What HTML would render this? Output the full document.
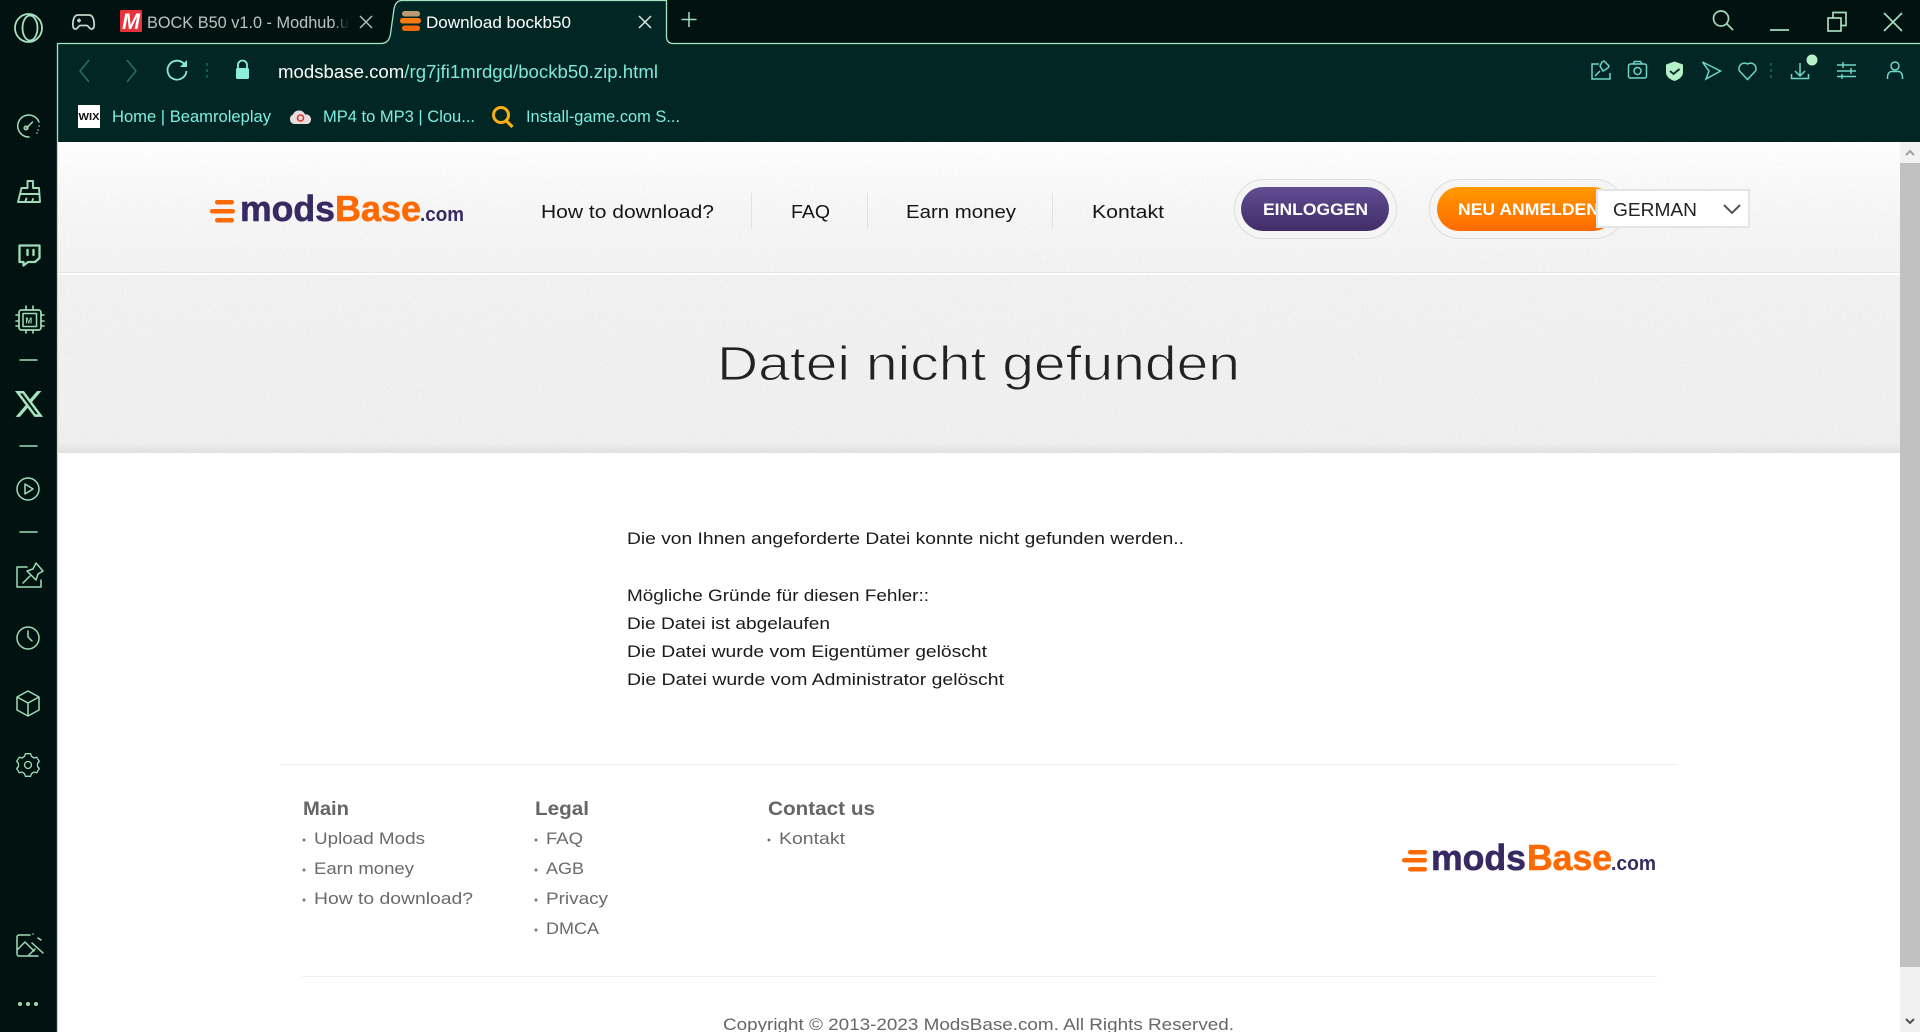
<!DOCTYPE html>
<html lang="de"><head><meta charset="utf-8"><title>Download bockb50</title>
<style>
html,body{margin:0;padding:0;width:1920px;height:1032px;overflow:hidden;background:#011210}
svg{display:block;position:absolute;left:0;top:0}
text{font-family:"Liberation Sans",sans-serif}
</style></head><body>
<svg xmlns="http://www.w3.org/2000/svg" width="1920" height="1032" viewBox="0 0 1920 1032">
<defs>
<linearGradient id="hdr" x1="0" y1="0" x2="0" y2="1"><stop offset="0" stop-color="#ffffff"/><stop offset=".5" stop-color="#f7f7f7"/><stop offset="1" stop-color="#f3f3f3"/></linearGradient>
<linearGradient id="band" x1="0" y1="0" x2="0" y2="1"><stop offset="0" stop-color="#f2f2f2"/><stop offset=".94" stop-color="#f0f0f0"/><stop offset="1" stop-color="#e2e2e2"/></linearGradient>
<linearGradient id="pur" x1="0" y1="0" x2="0" y2="1"><stop offset="0" stop-color="#614d92"/><stop offset="1" stop-color="#412e68"/></linearGradient>
<linearGradient id="org" x1="0" y1="0" x2="0" y2="1"><stop offset="0" stop-color="#ff9a00"/><stop offset="1" stop-color="#ff6a00"/></linearGradient>
<linearGradient id="fade" x1="0" y1="0" x2="1" y2="0"><stop offset="0" stop-color="#011210" stop-opacity="0"/><stop offset="1" stop-color="#011210"/></linearGradient>
<filter id="noise" x="0" y="0" width="100%" height="100%"><feTurbulence type="fractalNoise" baseFrequency=".55" numOctaves="2" seed="4"/><feColorMatrix values="0 0 0 0 0  0 0 0 0 0  0 0 0 0 0  0 0 0 .06 -.024"/></filter>
</defs>

<!-- browser frame -->
<rect width="1920" height="1032" fill="#011210"/>
<rect x="57" y="43" width="1863" height="100" fill="#022624"/>
<path d="M57.500 1032V43.500H381Q389 43.500 390.500 34L394 9Q395.500 .5 402 .5H666.500V36Q666.500 43.500 673 43.500H1920" fill="#022624" stroke="#a6e5c2" stroke-width="1.300"/>

<!-- opera logo -->
<g fill="none" stroke="#a6e3c0" stroke-width="1.800"><ellipse cx="28.500" cy="28" rx="13.500" ry="14"/><ellipse cx="30" cy="28" rx="7.500" ry="12.500"/></g>
<!-- gamepad -->
<g fill="none" stroke="#c3d6cb" stroke-width="1.800"><path d="M78 15H89C92 15 93.500 18 94 22C94.500 26 94 29 91.500 29C89.500 29 88 25.500 87 25.500H80C79 25.500 77.500 29 75.500 29C73 29 72.500 26 73 22C73.500 18 75 15 78 15Z"/><path d="M77 20.500h4M79 18.500v4M87 19.500h.1M89 22h.1"/></g>
<!-- tab 1 -->
<rect x="120" y="10" width="22" height="22" rx="1" fill="#e8333c"/>
<text x="122" y="29" font-size="22" font-weight="700" font-style="italic" fill="#fff" textLength="18" lengthAdjust="spacingAndGlyphs">M</text>
<text x="147" y="28" font-size="17" fill="#bcc5c1" textLength="202" lengthAdjust="spacingAndGlyphs">BOCK B50 v1.0 - Modhub.u</text>
<rect x="332" y="8" width="17" height="28" fill="url(#fade)"/>
<path d="M360 16l12 12M372 16l-12 12" stroke="#b3bdb8" stroke-width="1.500"/>
<!-- tab 2 -->
<rect x="402" y="11" width="18" height="5.500" rx="2.700" fill="#b99a72"/>
<rect x="400" y="18" width="21" height="5.500" rx="2.700" fill="#fb7a10"/>
<rect x="402" y="25.500" width="18" height="5.500" rx="2.700" fill="#f26a05"/>
<text x="426" y="28" font-size="17" fill="#fff" textLength="145" lengthAdjust="spacingAndGlyphs">Download bockb50</text>
<path d="M639 16l12 12M651 16l-12 12" stroke="#dfe8e4" stroke-width="1.500"/>
<path d="M689 12v15M681.500 19.500h15" stroke="#a6dcc0" stroke-width="1.500"/>

<!-- window controls -->
<g fill="none" stroke="#a6dcbc" stroke-width="1.700">
<circle cx="1721" cy="18.500" r="7.500"/><path d="M1727 24l6 6"/>
<path d="M1770 30h19"/>
<rect x="1828" y="18" width="13" height="13"/><path d="M1833 18v-5.500h13v13h-5"/>
<path d="M1884 13l18 18M1902 13l-18 18"/>
</g>

<!-- nav toolbar -->
<g fill="none" stroke="#2c6f68" stroke-width="1.400"><path d="M89 60L80 71l9 11"/><path d="M127 60l9 11-9 11"/></g>
<path d="M185 65a9.500 9.500 0 1 0 1.500 6" fill="none" stroke="#8ce8d8" stroke-width="1.800"/><path d="M187 60v7h-7z" fill="#8ce8d8"/>
<g fill="#0b5a50"><rect x="206" y="63" width="2" height="3"/><rect x="206" y="69" width="2" height="3"/><rect x="206" y="75" width="2" height="3"/></g>
<path d="M238 68v-3a4.500 4.500 0 0 1 9 0v3" fill="none" stroke="#8ef0dc" stroke-width="1.800"/><rect x="236" y="68" width="13" height="11" rx="1.500" fill="#8ef0dc"/>
<text x="278" y="78" font-size="18" fill="#fff" textLength="380" lengthAdjust="spacingAndGlyphs">modsbase.com<tspan fill="#7fe9d9">/rg7jfi1mrdgd/bockb50.zip.html</tspan></text>

<!-- toolbar right icons -->
<g fill="none" stroke="#6ed6c6" stroke-width="1.500">
<path d="M1599 64h-7v15h18v-6"/><path d="M1595 76l5-5M1600 66l3 5 5-3 1-2-5-5-2 1z"/>
<rect x="1628.500" y="64" width="18" height="14" rx="2"/><path d="M1633 64l1.500-2.500h6l1.500 2.500"/><circle cx="1637.500" cy="71" r="3.500"/>
<path d="M1702.500 62l18 9-14.500 8 3-8z"/><path d="M1747.500 79.500l-8-8.500a5.500 5.500 0 0 1 8-7 5.500 5.500 0 0 1 8 7z"/>
<path d="M1800 63v12M1795 71l5 5 5-5M1791.500 74v4.500h17V74"/>
<path d="M1837 65h19M1837 71h19M1837 76.500h19M1843 62v6M1851 68v6M1842 74v5"/>
<circle cx="1895" cy="66" r="4"/><path d="M1887.500 79v-2c0-4 3-5.500 3.500-5.500h8c.5 0 3.500 1.500 3.500 5.500v2"/>
</g>
<path d="M1674.500 61.500l8.500 3v8c0 4-4 7-8.500 8.500-4.500-1.500-8.500-4.500-8.500-8.500v-8z" fill="#b4f0c8"/>
<path d="M1670 71l3.500 3 6-5" fill="none" stroke="#022624" stroke-width="1.800"/>
<g fill="#0b5a50"><rect x="1770" y="63" width="2" height="3"/><rect x="1770" y="69" width="2" height="3"/><rect x="1770" y="75" width="2" height="3"/></g>
<circle cx="1812" cy="60" r="5.500" fill="#b4f0c8"/>

<!-- bookmarks -->
<rect x="78" y="105" width="22" height="23" fill="#fff"/>
<text x="78.500" y="120" font-size="10" font-weight="700" fill="#111" textLength="21" lengthAdjust="spacingAndGlyphs">WIX</text>
<text x="112" y="122" font-size="17" fill="#7eeee0" textLength="159" lengthAdjust="spacingAndGlyphs">Home | Beamroleplay</text>
<path d="M294 124a5 5 0 0 1-1-9.500 6 6 0 0 1 6-4c3 0 5 1.500 6 4a5 5 0 0 1 3 9.500z" fill="#e8dcdc"/><circle cx="300.500" cy="118" r="3" fill="none" stroke="#d83030" stroke-width="1.500"/>
<text x="323" y="122" font-size="17" fill="#7eeee0" textLength="152" lengthAdjust="spacingAndGlyphs">MP4 to MP3 | Clou...</text>
<circle cx="501" cy="115" r="7.500" fill="none" stroke="#f8b010" stroke-width="3"/><path d="M506.500 121l6 6" stroke="#f8b010" stroke-width="3.200"/>
<text x="526" y="122" font-size="17" fill="#7eeee0" textLength="154" lengthAdjust="spacingAndGlyphs">Install-game.com S...</text>

<!-- sidebar icons -->
<g fill="none" stroke="#9fdcb8" stroke-width="1.500" stroke-linecap="round" stroke-linejoin="round">
<path d="M39 122A11 11 0 1 0 29 137"/><path d="M26.500 128l6-6"/><circle cx="26" cy="128" r="1.800"/><path d="M38 130h.1M39 126h.1M37 133h.1"/>
<g stroke-width="1.900">
<path d="M27.500 188v-7h5.500v7h6L40 202H18L21.500 188ZM21 194h18M25 202l1.500-3.500M32 202l1-3"/>
<path d="M19.500 245.500H39.500V258L35 262H28L23.500 265.500V262H19.500Z" stroke-width="2.300"/>
<path d="M27.500 250v5M33.500 250v5" stroke-width="2.400"/>
<rect x="19" y="310" width="22" height="20" rx="2.500" stroke-width="1.700"/><rect x="23" y="313.500" width="13.500" height="13" stroke-width="1.500"/>
<path d="M26 310v-4M33 310v-4M26 330v3M33 330v3M19 315h-3M19 321h-3M19 326h-3M41 315h3M41 321h3M41 326h3" stroke-width="1.600"/>
</g>
<path d="M20 360h17M20 446h17M20 532h17"/>
<circle cx="28" cy="489" r="11"/><path d="M25 484l8 5-8 5z"/>
<path d="M27 567H17V587H41V580"/><path d="M36 563l7 8-5 3-2 6-9-9 6-2zM30 576l-7 7"/>
<circle cx="28" cy="638" r="11"/><path d="M28 631l0 6 4 4"/>
<path d="M28 691l11 6v13l-11 6-11-6v-13zM17 697l11 6 11-6M28 703v13"/>
<g transform="translate(28 765) scale(.87) translate(-28 -765)"><path d="M24 755l1-3h6l1 3 3 2 3-1 3 5-2 2v4l2 2-3 5-3-1-3 2-1 3h-6l-1-3-3-2-3 1-3-5 2-2v-4l-2-2 3-5 3 1z"/><circle cx="28" cy="765" r="4"/></g>
<path d="M30 935H19a2 2 0 0 0-2 2v17a2 2 0 0 0 2 2h19M17 950l8-8 9 9M28 956l7-7M43 953l-11-10M33 934h.1M38 938l3 2"/>
</g>
<path transform="translate(13.400 388) scale(1.300 1.330)" d="M18.244 2.250h3.308l-7.227 8.260 8.502 11.240H16.170l-5.214-6.817L4.990 21.750H1.680l7.730-8.835L1.254 2.250H8.080l4.713 6.231zm-1.161 17.520h1.833L7.084 4.126H5.117z" fill="#a6e3c0"/>
<g fill="#9fdcb8"><circle cx="20" cy="1004" r="2"/><circle cx="28" cy="1004" r="2"/><circle cx="36" cy="1004" r="2"/></g>
<text x="25.500" y="323.500" font-size="8" font-weight="700" fill="#9fdcb8">M</text>

<!-- page -->
<rect x="58" y="142" width="1842" height="890" fill="#fff"/>
<rect x="58" y="142" width="1842" height="132" fill="url(#hdr)"/>
<rect x="58" y="273" width="1842" height="2" fill="#fff"/>
<rect x="58" y="272" width="1842" height="1" fill="#e6e6e6"/>
<rect x="58" y="275" width="1842" height="178" fill="url(#band)"/>
<rect x="58" y="142" width="1842" height="311" filter="url(#noise)"/>

<!-- header logo -->
<g fill="#ff6a00"><rect x="215" y="200" width="19" height="4.500" rx="2.200"/><rect x="210" y="209" width="25" height="4.500" rx="2.200"/><rect x="215" y="218" width="19" height="4.500" rx="2.200"/></g>
<g stroke-width=".6">
<text x="240" y="221" font-size="36" font-weight="700" fill="#372a63" stroke="#372a63" textLength="95" lengthAdjust="spacingAndGlyphs">mods</text>
<text x="335" y="221" font-size="36" font-weight="700" fill="#ff6a00" stroke="#ff6a00" textLength="86" lengthAdjust="spacingAndGlyphs">Base</text>
<text x="420" y="221" font-size="20" font-weight="700" fill="#372a63" textLength="44" lengthAdjust="spacingAndGlyphs">.com</text>
</g>

<!-- nav -->
<g font-size="18" fill="#151515">
<text x="541" y="218" textLength="173" lengthAdjust="spacingAndGlyphs">How to download?</text>
<text x="791" y="218" textLength="39" lengthAdjust="spacingAndGlyphs">FAQ</text>
<text x="906" y="218" textLength="110" lengthAdjust="spacingAndGlyphs">Earn money</text>
<text x="1092" y="218" textLength="72" lengthAdjust="spacingAndGlyphs">Kontakt</text>
</g>
<g fill="#e2e2e2"><rect x="751" y="193" width="1" height="36"/><rect x="867" y="193" width="1" height="36"/><rect x="1052" y="193" width="1" height="36"/></g>

<!-- buttons -->
<rect x="1234.500" y="179.500" width="162" height="59" rx="29.500" fill="#f5f5f5" stroke="#dedede"/>
<rect x="1241" y="187" width="148" height="44" rx="22" fill="url(#pur)"/>
<text x="1263" y="215" font-size="17" font-weight="700" fill="#fff" textLength="105" lengthAdjust="spacingAndGlyphs">EINLOGGEN</text>
<rect x="1429.500" y="179.500" width="195" height="59" rx="29.500" fill="#f5f5f5" stroke="#dedede"/>
<rect x="1437" y="187" width="178" height="44" rx="22" fill="url(#org)"/>
<text x="1458" y="215" font-size="17" font-weight="700" fill="#fff" textLength="141" lengthAdjust="spacingAndGlyphs">NEU ANMELDEN</text>
<rect x="1597" y="190" width="152" height="37" fill="#fff" stroke="#e4e4e4" stroke-width="2"/>
<text x="1613" y="216" font-size="18" fill="#222" textLength="84" lengthAdjust="spacingAndGlyphs">GERMAN</text>
<path d="M1724 205l8 8 8-8" fill="none" stroke="#555" stroke-width="2"/>

<!-- title -->
<text x="717" y="380" font-size="48" fill="#222" stroke="#f0f0f0" stroke-width="1" textLength="523" lengthAdjust="spacingAndGlyphs">Datei nicht gefunden</text>

<!-- body -->
<g font-size="16.500" fill="#1a1a1a">
<text x="627" y="544" textLength="557" lengthAdjust="spacingAndGlyphs">Die von Ihnen angeforderte Datei konnte nicht gefunden werden..</text>
<text x="627" y="601" textLength="302" lengthAdjust="spacingAndGlyphs">Mögliche Gründe für diesen Fehler::</text>
<text x="627" y="629" textLength="203" lengthAdjust="spacingAndGlyphs">Die Datei ist abgelaufen</text>
<text x="627" y="657" textLength="360" lengthAdjust="spacingAndGlyphs">Die Datei wurde vom Eigentümer gelöscht</text>
<text x="627" y="685" textLength="377" lengthAdjust="spacingAndGlyphs">Die Datei wurde vom Administrator gelöscht</text>
</g>

<!-- footer -->
<rect x="280" y="764" width="1397" height="1" fill="#efefef"/>
<g font-size="19" font-weight="700" fill="#666">
<text x="303" y="815" textLength="46" lengthAdjust="spacingAndGlyphs">Main</text>
<text x="535" y="815" textLength="54" lengthAdjust="spacingAndGlyphs">Legal</text>
<text x="768" y="815" textLength="107" lengthAdjust="spacingAndGlyphs">Contact us</text>
</g>
<g font-size="17" fill="#6a6a6a">
<text x="314" y="844" textLength="111" lengthAdjust="spacingAndGlyphs">Upload Mods</text>
<text x="314" y="874" textLength="100" lengthAdjust="spacingAndGlyphs">Earn money</text>
<text x="314" y="904" textLength="159" lengthAdjust="spacingAndGlyphs">How to download?</text>
<text x="546" y="844" textLength="37" lengthAdjust="spacingAndGlyphs">FAQ</text>
<text x="546" y="874" textLength="38" lengthAdjust="spacingAndGlyphs">AGB</text>
<text x="546" y="904" textLength="62" lengthAdjust="spacingAndGlyphs">Privacy</text>
<text x="546" y="934" textLength="53" lengthAdjust="spacingAndGlyphs">DMCA</text>
<text x="779" y="844" textLength="66" lengthAdjust="spacingAndGlyphs">Kontakt</text>
</g>
<g fill="#777"><circle cx="304" cy="840" r="1.500"/><circle cx="304" cy="870" r="1.500"/><circle cx="304" cy="900" r="1.500"/><circle cx="536" cy="840" r="1.500"/><circle cx="536" cy="870" r="1.500"/><circle cx="536" cy="900" r="1.500"/><circle cx="536" cy="930" r="1.500"/><circle cx="769" cy="840" r="1.500"/></g>
<rect x="302" y="976" width="1355" height="1" fill="#efefef"/>
<text x="723" y="1030" font-size="16.500" fill="#666" textLength="511" lengthAdjust="spacingAndGlyphs">Copyright © 2013-2023 ModsBase.com. All Rights Reserved.</text>

<!-- footer logo -->
<g fill="#ff6a00"><rect x="1408" y="850" width="19" height="4.500" rx="2.200"/><rect x="1402" y="858" width="25" height="4.500" rx="2.200"/><rect x="1408" y="867" width="19" height="4.500" rx="2.200"/></g>
<g stroke-width=".6">
<text x="1431" y="870" font-size="36" font-weight="700" fill="#372a63" stroke="#372a63" textLength="95" lengthAdjust="spacingAndGlyphs">mods</text>
<text x="1527" y="870" font-size="36" font-weight="700" fill="#ff6a00" stroke="#ff6a00" textLength="85" lengthAdjust="spacingAndGlyphs">Base</text>
<text x="1611" y="870" font-size="20" font-weight="700" fill="#372a63" textLength="45" lengthAdjust="spacingAndGlyphs">.com</text>
</g>

<!-- scrollbar -->
<rect x="1900" y="142" width="20" height="890" fill="#f1f1f1"/>
<rect x="1900" y="163" width="20" height="804" fill="#c1c1c1"/>
<path d="M1906 155l4-4 4 4" fill="none" stroke="#a0a0a0" stroke-width="2"/>
<path d="M1906 1019l4 4 4-4" fill="none" stroke="#505050" stroke-width="2"/>
</svg>
</body></html>
